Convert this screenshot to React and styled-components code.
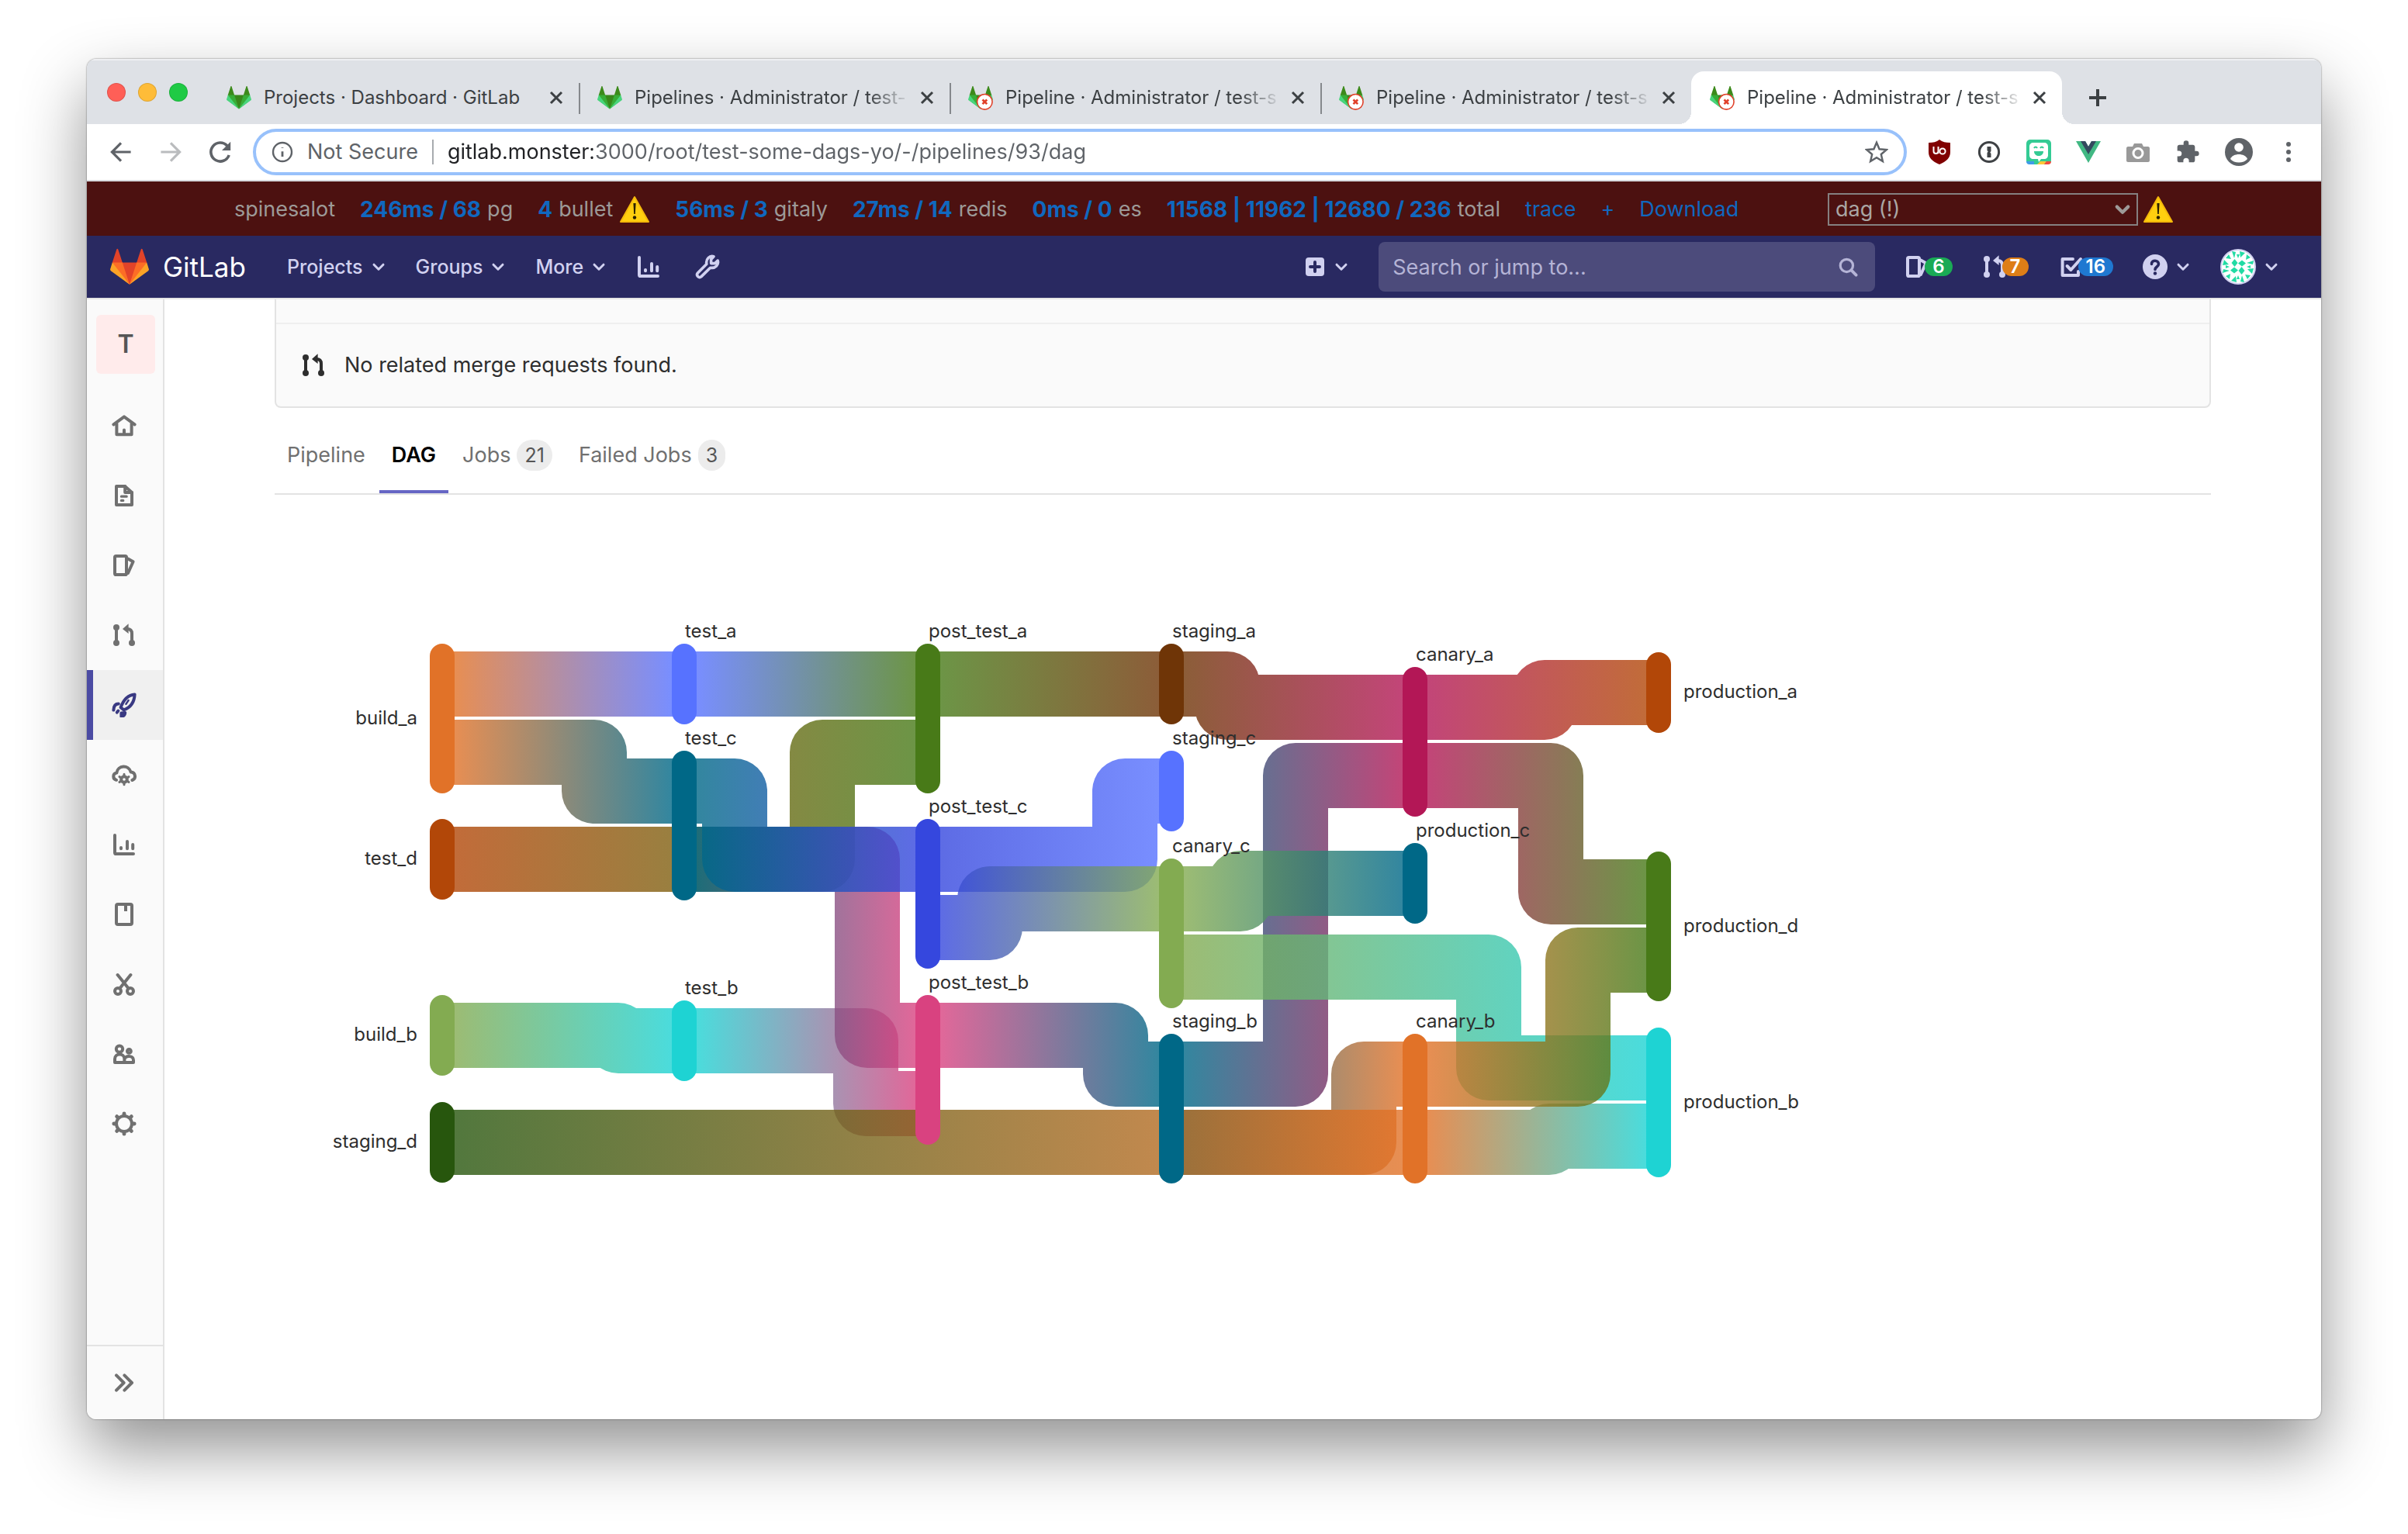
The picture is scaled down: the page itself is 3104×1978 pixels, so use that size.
import React from "react";
import styled, { createGlobalStyle, css } from "styled-components";

const GlobalStyle = createGlobalStyle`
  *, *::before, *::after { box-sizing: border-box; }
  body {
    margin: 0;
    background: #fff;
    color: #303030;
    font-family: Inter, "Liberation Sans", sans-serif;
    font-size: 27px;
    line-height: 36px;
  }
  a { color: inherit; text-decoration: none; }
  button { font: inherit; color: inherit; background: none; border: 0; padding: 0; }
  svg { display: block; flex: none; }
`;

/* ---------- window ---------- */

const Desktop = styled.div`
  display: flex;
  min-height: 100vh;
  padding: 76px 112px 148px;
`;

const Window = styled.div`
  flex: 1;
  min-width: 0;
  display: flex;
  flex-direction: column;
  overflow: hidden;
  border-radius: 12px;
  background: #fff;
  box-shadow: 0 0 2px rgba(0, 0, 0, 0.6), 0 38px 84px rgba(0, 0, 0, 0.43);
`;

const TabStrip = styled.div`
  display: flex;
  align-items: flex-end;
  height: 84px;
  padding-left: 26px;
  background: #dee1e6;
  box-shadow: inset 0 2px 0 #eff0f3;
`;

const Lights = styled.div`
  display: flex;
  gap: 16px;
  width: 130px;
  padding-bottom: 29px;
`;

const Light = styled.button`
  width: 24px;
  height: 24px;
  border-radius: 50%;
  border: 1px solid rgba(0, 0, 0, 0.12);
  background: ${(p) => p.$color};
`;

const Tab = styled.div`
  position: relative;
  display: flex;
  align-items: center;
  width: 478px;
  height: 68px;
  padding: 0 20px 0 24px;
  border-radius: 16px 16px 0 0;
  color: #3c4043;
  font-size: 24px;
  line-height: 32px;
  ${(p) =>
    p.$active
      ? css`
          background: #fff;
          &::before,
          &::after {
            content: "";
            position: absolute;
            bottom: 0;
            width: 16px;
            height: 16px;
          }
          &::before {
            right: 100%;
            background: radial-gradient(circle at 0 0, transparent 16px, #fff 16px);
          }
          &::after {
            left: 100%;
            background: radial-gradient(circle at 100% 0, transparent 16px, #fff 16px);
          }
        `
      : p.$divided &&
        css`
          &::after {
            content: "";
            position: absolute;
            right: -2px;
            top: 15px;
            width: 2px;
            height: 40px;
            background: #85888c;
          }
        `}
`;

const TabTitle = styled.a`
  flex: 1;
  min-width: 0;
  margin: 0 12px 0 16px;
  white-space: nowrap;
  ${(p) => p.$fade && css`mask-image: linear-gradient(90deg, #000 calc(100% - 54px), transparent);`}
`;

const NewTab = styled.button`
  align-self: flex-end;
  display: flex;
  align-items: center;
  height: 68px;
  margin-left: 34px;
  color: #3c4043;
`;

const Toolbar = styled.div`
  display: flex;
  align-items: center;
  height: 74px;
  padding: 0 28px;
  border-bottom: 2px solid #d8dadd;
  background: #fff;
  color: #5f6368;
`;

const ToolButtons = styled.div`
  display: flex;
  gap: 32px;
  margin-right: 26px;
`;

const Omnibox = styled.div`
  flex: 1;
  display: flex;
  align-items: center;
  height: 60px;
  padding: 0 20px;
  border: 4px solid #98c1fb;
  border-radius: 30px;
`;

const SecurityNote = styled.span`
  margin-left: 18px;
  padding-right: 18px;
  border-right: 2px solid #a8abaf;
  line-height: 32px;
  white-space: nowrap;
`;

const UrlInput = styled.input`
  flex: 1;
  min-width: 0;
  margin-left: 18px;
  padding: 0;
  border: 0;
  outline: 0;
  font: inherit;
  color: #5f6368;
  background: linear-gradient(90deg, #202124 187px, #5f6368 187px);
  background-clip: text;
  -webkit-background-clip: text;
  -webkit-text-fill-color: transparent;
`;

const Extensions = styled.div`
  display: flex;
  align-items: center;
  gap: 32px;
  margin-left: 26px;
`;

/* ---------- performance bar ---------- */

const PerfBar = styled.div`
  display: flex;
  align-items: center;
  gap: 32px;
  height: 70px;
  padding: 2px 190px 0;
  background: #4c1110;
  color: #9d9a98;
  white-space: nowrap;
`;

const Metric = styled.div`
  display: flex;
  align-items: center;
  gap: 8px;
`;

const PerfLink = styled.a`
  color: #1068bf;
  ${(p) => p.$strong && css`font-size: 28px; font-weight: 700;`}
`;

const RequestPicker = styled.div`
  display: flex;
  align-items: center;
  gap: 6px;
  margin-left: auto;
`;

const SelectBox = styled.div`
  display: grid;
  width: 400px;
  align-items: center;
  & > * { grid-area: 1 / 1; }
  svg { justify-self: end; margin-right: 8px; pointer-events: none; }
`;

const RequestSelect = styled.select`
  appearance: none;
  height: 42px;
  padding: 0 10px 0 8px;
  border: 2px solid #858080;
  border-radius: 0;
  background: transparent;
  color: #aaa6a4;
  font: inherit;
`;

/* ---------- navigation bar ---------- */

const NavBar = styled.header`
  display: flex;
  align-items: center;
  height: 82px;
  padding: 0 54px 0 30px;
  background: #292961;
  border-bottom: 2px solid #e5e5e5;
  color: #d1d1f0;
  font-size: 25px;
  font-weight: 500;
`;

const Brand = styled.a`
  display: flex;
  align-items: center;
  gap: 18px;
  width: 228px;
  color: #fff;
  font-size: 35px;
  font-weight: 400;
`;

const NavMenus = styled.nav`
  display: flex;
  align-items: center;
  gap: 38px;
`;

const NavTools = styled.div`
  display: flex;
  gap: 44px;
`;

const NavButton = styled.button`
  display: flex;
  align-items: center;
  gap: ${(p) => p.$gap || 10}px;
`;

const NavActions = styled.div`
  display: flex;
  align-items: center;
  gap: 38px;
  margin-left: auto;
`;

const SearchBox = styled.label`
  display: flex;
  align-items: center;
  width: 640px;
  height: 64px;
  padding: 0 22px 0 18px;
  border-radius: 8px;
  background: #4c4b7b;
  color: #b5b4d6;
`;

const SearchInput = styled.input`
  flex: 1;
  min-width: 0;
  padding: 2px 0 0;
  border: 0;
  outline: 0;
  background: none;
  font: 400 27px/36px Inter, "Liberation Sans", sans-serif;
  color: #fff;
  &::placeholder { color: #b5b4d6; opacity: 1; }
`;

const Counter = styled.a`
  display: flex;
  align-items: center;
`;

const CountPill = styled.span`
  min-width: 34px;
  height: 24px;
  margin-left: -6px;
  padding: 0 10px;
  border-radius: 12px;
  background: ${(p) => p.$color};
  color: #fff;
  font-size: 24px;
  font-weight: 600;
  line-height: 24px;
  text-align: center;
`;

/* ---------- page ---------- */

const Body = styled.div`
  flex: 1;
  display: flex;
`;

const Sidebar = styled.nav`
  display: flex;
  flex-direction: column;
  width: 100px;
  border-right: 2px solid #e3e3e3;
  background: #fafafa;
  color: #707070;
`;

const ProjectTile = styled.a`
  margin: 20px 10px 22px 12px;
  border-radius: 6px;
  background: #ffebeb;
  color: #555;
  font-size: 32px;
  font-weight: 600;
  line-height: 76px;
  text-align: center;
`;

const SideItem = styled.a`
  display: flex;
  align-items: center;
  height: 90px;
  padding-left: 32px;
  ${(p) =>
    p.$active &&
    css`
      background: #f0f0f0;
      box-shadow: inset 8px 0 0 #4b4ba3;
      color: #393982;
    `}
`;

const Collapse = styled.button`
  display: flex;
  align-items: center;
  height: 96px;
  margin-top: auto;
  padding-left: 32px;
  border-top: 2px solid #e3e3e3;
`;

const Content = styled.main`
  flex: 1;
  min-width: 0;
  padding: 0 142px;
`;

const InfoWell = styled.section`
  border: 2px solid #e3e3e3;
  border-top: 0;
  border-radius: 0 0 8px 8px;
  background: #fafafa;
  padding-top: 30px;
`;

const InfoRow = styled.div`
  display: flex;
  align-items: center;
  gap: 24px;
  height: 108px;
  padding-left: 32px;
  border-top: 2px solid #efefef;
  color: #2e2e2e;
`;

const PageTabs = styled.nav`
  display: flex;
  gap: 2px;
  height: 112px;
  padding-top: 12px;
  border-bottom: 2px solid #e3e3e3;
`;

const PageTab = styled.a`
  display: flex;
  align-items: center;
  gap: 8px;
  padding: 0 16px;
  color: ${(p) => (p.$active ? "#000" : "#707070")};
  font-weight: ${(p) => (p.$active ? 600 : 400)};
  box-shadow: ${(p) => (p.$active ? "inset 0 -4px 0 #6666c4" : "none")};
`;

const TabCount = styled.span`
  min-width: 34px;
  padding: 0 10px;
  border-radius: 20px;
  background: #ececec;
  color: #555;
  font-size: 25px;
  line-height: 40px;
  text-align: center;
`;

const Graph = styled.svg`
  width: 100%;
  height: auto;
  margin-top: 142px;
`;

const NodeLabel = styled.text`
  fill: #2e2e2e;
  font-size: 24px;
  text-anchor: ${(p) => p.$anchor || "start"};
`;

/* ---------- icons ---------- */

const Icon = ({ size = 32, children, box = 16, width = 2 }) => (
  <svg
    width={size}
    height={size}
    viewBox={`0 0 ${box} ${box}`}
    fill="none"
    stroke="currentColor"
    strokeWidth={width}
    strokeLinecap="round"
    strokeLinejoin="round"
    aria-hidden="true"
  >
    {children}
  </svg>
);

const Chevron = ({ size = 20, width = 1.5 }) => (
  <Icon size={size} box={10} width={width}>
    <path d="M2 3.6l3 3 3-3" />
  </Icon>
);

const Cross = () => (
  <Icon size={18} box={18} width={3}>
    <path d="M2 2l14 14M16 2L2 16" strokeLinecap="butt" />
  </Icon>
);

const orange = ["#e24329", "#fc6d26", "#fca326", "#e24329"];
const green = ["#3c8a1b", "#37ad37", "#48d47c", "#38871b"];

const Tanuki = ({ size, colors = orange, failed }) => (
  <svg width={size} height={size} viewBox="0 0 36 36" aria-hidden="true">
    <path fill={colors[0]} d="M2 14l9.38 9v-9l-4-12.28c-.205-.632-1.176-.632-1.38 0z" />
    <path fill={colors[0]} d="M34 14l-9.38 9v-9l4-12.28c.205-.632 1.176-.632 1.38 0z" />
    <path fill={colors[3]} d="M18 34.38L3 14h30z" />
    <path fill={colors[1]} d="M18 34.38L11.38 14H2l4 11z" />
    <path fill={colors[1]} d="M18 34.38L24.62 14H34l-4 11z" />
    <path fill={colors[2]} d="M2 14L.1 20.16c-.18.565 0 1.2.5 1.56l17.42 12.66z" />
    <path fill={colors[2]} d="M34 14l1.9 6.16c.18.565 0 1.2-.5 1.56L18 34.38z" />
    {failed && (
      <g>
        <circle cx="24" cy="24" r="11" fill="#fff" stroke="#e0402a" strokeWidth="1.8" />
        <path d="M20.800 20.800l6.400 6.400M27.200 20.800l-6.400 6.400" stroke="#e0402a" strokeWidth="3" />
      </g>
    )}
  </svg>
);

const Warning = () => (
  <svg width="40" height="36" viewBox="0 0 40 36" role="img" aria-label="warning">
    <path d="M20 2L38 34H2z" fill="#ffcf0f" stroke="#f5b90a" strokeWidth="2" strokeLinejoin="round" />
    <path d="M18.400 10h3.200l-.8 14h-1.600z" fill="#2b2100" />
    <circle cx="20" cy="28.500" r="2.200" fill="#2b2100" />
  </svg>
);

const MergeIcon = ({ size = 32 }) => (
  <Icon size={size}>
    <path d="M3 3.500v9M10 4c2 0 3 1 3 3v5.500" />
    <path d="M10.800 .6v6.400L7 4z" fill="currentColor" stroke="none" />
    <g fill="currentColor" stroke="none">
      <circle cx="3" cy="3" r="2" />
      <circle cx="3" cy="13" r="2" />
      <circle cx="13" cy="13" r="2" />
    </g>
  </Icon>
);

const IssuesIcon = () => (
  <Icon>
    <rect x="2" y="2" width="7.500" height="12" rx="0.800" />
    <path d="M10.500 3.800L13.800 5.600 10.500 13" />
  </Icon>
);

const ChartIcon = () => (
  <Icon>
    <path d="M2 2v11.200c0 .5.3.8.8.8H14M6 10v.6M10 6v4.600M13.600 8v2.600" />
  </Icon>
);

const sideIcons = [
  ["Project overview", <Icon key="i"><path d="M1.200 7.200L8 2.200l6.800 5M3.200 6.600V13.600h9.600V6.600" /><path d="M8 13.500v-2.800" /></Icon>],
  ["Repository", <Icon key="i"><path d="M3 2h5.500L13 6v8H3z" /><path d="M8.600 2v4H13" /><path d="M6.200 8.600h3.400M6.200 11.200h1.200" strokeWidth="1.600" /></Icon>],
  ["Issues", <IssuesIcon key="i" />],
  ["Merge requests", <MergeIcon key="i" />],
  ["CI / CD", <Icon key="i"><path d="M14.800 1.200c-4 .3-7 2.800-9 8.400l2 1.600c4.600-1.700 6.800-5.200 7-10z" /><path d="M9.200 7.400l1.600-2.400" strokeWidth="1.200" /><path d="M4.400 7.300C2.200 7.300 1.300 9 1.200 11.300M8.600 13c-.1 1.300-1.100 2.200-2.400 2.400v-2.200z" /><path d="M4.200 11.800l-.8 1" /></Icon>],
  ["Operations", <Icon key="i"><path d="M3 11.400C.4 10.600.6 7 3.200 6.700 3.800 1.800 11 1.300 12.300 6.300c3.200.2 3.600 4.200.9 5.200" /><circle cx="8" cy="11" r="1.900" /><path d="M8 7.600v1M8 13.400v1M5 9.300l.9.500M10.100 12.200l.9.500M5 12.700l.9-.5M10.100 9.800l.9-.5" strokeWidth="1.500" /></Icon>],
  ["Analytics", <ChartIcon key="i" />],
  ["Wiki", <Icon key="i"><rect x="3" y="1.500" width="10" height="13" rx="1" /><path d="M9 2v4" strokeLinecap="butt" /></Icon>],
  ["Snippets", <Icon key="i"><circle cx="4" cy="12.500" r="2" /><circle cx="12" cy="12.500" r="2" /><path d="M5.200 10.700L12.200 2M10.800 10.700L3.800 2" /></Icon>],
  ["Members", <Icon key="i"><circle cx="5" cy="4.800" r="2.100" /><circle cx="11.200" cy="6.200" r="1.200" /><path d="M2 13.500v-2.300c0-4 6.200-4 6.200 0v2.300zM8.200 13.500H14v-1.500c0-2.900-4.400-3.200-5.600-1.200" /></Icon>],
  ["Settings", <Icon key="i"><circle cx="8" cy="8" r="5" /><path d="M8 1.400v1M8 13.600v1M1.400 8h1M13.600 8h1M3.300 3.300l.7.700M12 12l.7.700M3.300 12.700l.7-.7M12 4l.7-.7" strokeWidth="2.400" /></Icon>],
];

/* ---------- needs graph ---------- */

const ORIGIN = { x: 354, y: 780, width: 2496, height: 780 };
const COLUMNS = [554, 866, 1180, 1494, 1808, 2122];
const NODE_WIDTH = 32;
const LINK_WIDTH = 84;
const LINK_STEP = 88;

const nodes = {
  build_a: [0, 830, 2, "#e17228"],
  test_d: [0, 1056, 1, "#b24708"],
  build_b: [0, 1283, 1, "#83ab51"],
  staging_d: [0, 1421, 1, "#27560d"],
  test_a: [1, 830, 1, "#5772ff"],
  test_c: [1, 968, 2, "#006887"],
  test_b: [1, 1290, 1, "#1ed3d3"],
  post_test_a: [2, 830, 2, "#487a18"],
  post_test_c: [2, 1056, 2, "#3547de"],
  post_test_b: [2, 1283, 2, "#d94280"],
  staging_a: [3, 830, 1, "#6f3507"],
  staging_c: [3, 968, 1, "#5772ff"],
  canary_c: [3, 1107, 2, "#83ab51"],
  staging_b: [3, 1333, 2, "#006887"],
  canary_a: [4, 860, 2, "#b31756"],
  production_c: [4, 1087, 1, "#006887"],
  canary_b: [4, 1333, 2, "#e17228"],
  production_a: [5, 841, 1, "#b24708"],
  production_d: [5, 1098, 2, "#487a18"],
  production_b: [5, 1325, 2, "#1ed3d3"],
};

/* source, source slot, target, target slot, x of the vertical run */
const links = [
  ["build_a", 0, "test_a", 0, 700],
  ["build_a", 1, "test_c", 0, 766],
  ["test_d", 0, "post_test_a", 1, 1060],
  ["build_b", 0, "test_b", 0, 797],
  ["test_a", 0, "post_test_a", 0, 1000],
  ["test_b", 0, "post_test_b", 1, 1116],
  ["test_c", 1, "post_test_b", 0, 1118],
  ["test_c", 0, "post_test_c", 0, 947],
  ["post_test_a", 0, "staging_a", 0, 1300],
  ["post_test_c", 0, "staging_c", 0, 1450],
  ["post_test_c", 1, "canary_c", 0, 1276],
  ["post_test_b", 0, "staging_b", 0, 1438],
  ["staging_a", 0, "canary_a", 0, 1582],
  ["staging_b", 0, "canary_a", 1, 1670],
  ["staging_b", 1, "canary_b", 0, 1758],
  ["staging_d", 0, "canary_b", 1, 1700],
  ["canary_c", 0, "production_c", 0, 1599],
  ["canary_c", 1, "production_b", 0, 1919],
  ["canary_a", 0, "production_a", 0, 1991],
  ["canary_a", 1, "production_d", 0, 1999],
  ["canary_b", 1, "production_b", 1, 1997],
  ["canary_b", 0, "production_d", 1, 2034],
];

const slotY = (name, slot) => nodes[name][1] + 10 + LINK_WIDTH / 2 + slot * LINK_STEP;

function NeedsGraph() {
  return (
    <Graph
      viewBox={`${ORIGIN.x} ${ORIGIN.y} ${ORIGIN.width} ${ORIGIN.height}`}
      role="img"
      aria-label="Job dependencies"
    >
      <defs>
        {links.map(([from, , to], i) => (
          <linearGradient
            key={i}
            id={`link-${i}`}
            gradientUnits="userSpaceOnUse"
            x1={COLUMNS[nodes[from][0]] + NODE_WIDTH}
            x2={COLUMNS[nodes[to][0]]}
          >
            <stop offset="0" stopColor={nodes[from][3]} />
            <stop offset="1" stopColor={nodes[to][3]} />
          </linearGradient>
        ))}
      </defs>
      <g fill="none" strokeWidth={LINK_WIDTH} strokeLinejoin="round" strokeOpacity="0.8">
        {links.map(([from, fromSlot, to, toSlot, turn], i) => {
          const x0 = COLUMNS[nodes[from][0]] + NODE_WIDTH / 2;
          const x1 = COLUMNS[nodes[to][0]] + NODE_WIDTH / 2;
          const y0 = slotY(from, fromSlot);
          const y1 = slotY(to, toSlot);
          const d = `M${x0} ${y0}H${turn}V${y1}H${x1}`;
          return <path key={i} d={d} stroke={`url(#link-${i})`} />;
        })}
      </g>
      {Object.entries(nodes).map(([name, [column, top, slots, color]]) => {
        const height = 104 + (slots - 1) * (LINK_STEP + 1);
        const left = COLUMNS[column];
        const middle = top + height / 2 + 7;
        const place =
          column === 0
            ? { x: left - 16, y: middle, $anchor: "end" }
            : column === 5
            ? { x: left + NODE_WIDTH + 16, y: middle }
            : { x: left + NODE_WIDTH / 2 + 1, y: top - 8 };
        return (
          <g key={name}>
            <rect x={left} y={top} width={NODE_WIDTH} height={height} rx={NODE_WIDTH / 2} fill={color} />
            <NodeLabel {...place}>{name}</NodeLabel>
          </g>
        );
      })}
    </Graph>
  );
}

/* ---------- data ---------- */

const browserTabs = [
  ["Projects · Dashboard · GitLab", false],
  ["Pipelines · Administrator / test-", false],
  ["Pipeline · Administrator / test-s", true],
  ["Pipeline · Administrator / test-s", true],
  ["Pipeline · Administrator / test-s", true],
];

const metrics = [
  ["246ms / 68", "pg"],
  ["4", "bullet", true],
  ["56ms / 3", "gitaly"],
  ["27ms / 14", "redis"],
  ["0ms / 0", "es"],
  ["11568 | 11962 | 12680 / 236", "total"],
];

export default function App() {
  return (
    <>
      <GlobalStyle />
      <Desktop>
        <Window>
          <TabStrip>
            <Lights>
              <Light $color="#ff5f57" aria-label="Close window" />
              <Light $color="#febc38" aria-label="Minimize window" />
              <Light $color="#1fca45" aria-label="Zoom window" />
            </Lights>
            {browserTabs.map(([title, failed], i) => (
              <Tab key={i} $active={i === 4} $divided={i < 3}>
                <Tanuki size={32} colors={green} failed={failed} />
                <TabTitle href="#" $fade={i > 0}>{title}</TabTitle>
                <button aria-label="Close tab"><Cross /></button>
              </Tab>
            ))}
            <NewTab aria-label="New tab">
              <Icon size={24} box={24} width={4}><path d="M12 1v22M1 12h22" strokeLinecap="butt" /></Icon>
            </NewTab>
          </TabStrip>

          <Toolbar>
            <ToolButtons>
              <button aria-label="Back">
                <Icon><path d="M14.300 8H2.200M8 2.200L2.200 8 8 13.800" strokeWidth="1.600" strokeLinecap="butt" strokeLinejoin="miter" /></Icon>
              </button>
              <button aria-label="Forward">
                <Icon><path d="M1.700 8h12.100M8 2.200L13.800 8 8 13.800" stroke="#babcbe" strokeWidth="1.600" strokeLinecap="butt" strokeLinejoin="miter" /></Icon>
              </button>
              <button aria-label="Reload">
                <Icon>
                  <path d="M13.600 10A6 6 0 1 1 12.400 4" strokeWidth="1.800" strokeLinecap="butt" />
                  <path d="M14.600 1.400V7H9z" fill="currentColor" stroke="none" />
                </Icon>
              </button>
            </ToolButtons>
            <Omnibox>
              <Icon size={28} box={14} width={1.2}>
                <circle cx="7" cy="7" r="6" />
                <path d="M7 6.600v3.400M7 4v.4" strokeWidth="1.400" strokeLinecap="butt" />
              </Icon>
              <SecurityNote>Not Secure</SecurityNote>
              <UrlInput
                aria-label="Address"
                defaultValue="gitlab.monster:3000/root/test-some-dags-yo/-/pipelines/93/dag"
              />
              <button aria-label="Bookmark">
                <Icon size={30} width={1.3}>
                  <path d="M8 1.500l1.900 4.500 4.900.4-3.700 3.200 1.100 4.800L8 11.800l-4.200 2.600 1.100-4.800L1.200 6.400l4.900-.4z" strokeLinejoin="miter" />
                </Icon>
              </button>
            </Omnibox>
            <Extensions>
              <button aria-label="uBlock">
                <svg width="32" height="32" viewBox="0 0 32 32">
                  <path d="M16 0c4 3 8 4 14 4v12c0 8-5 12-14 16C7 28 2 24 2 16V4c6 0 10-1 14-4z" fill="#800000" />
                  <path d="M8.500 9v6c0 4 6 4 6 0V9M14.500 9v9" fill="none" stroke="#fff" strokeWidth="2" />
                  <circle cx="20" cy="15" r="3.600" fill="none" stroke="#fff" strokeWidth="2" />
                </svg>
              </button>
              <button aria-label="1Password">
                <svg width="32" height="32" viewBox="0 0 32 32">
                  <circle cx="16" cy="16" r="12.600" fill="#fff" stroke="#3f4245" strokeWidth="3" />
                  <path d="M13.500 9h5v6l-1.200 1.500 1.200 1.500v5h-5v-6l1.200-1.500-1.200-1.500z" fill="#3f4245" />
                </svg>
              </button>
              <button aria-label="Bitmoji">
                <svg width="32" height="32" viewBox="0 0 32 32">
                  <rect width="32" height="32" rx="5" fill="#34cb94" />
                  <path d="M0 28h10v4H4c-2 0-4-1-4-4z" fill="#3f9be8" />
                  <path d="M14 32l4-4h8l-3 4z" fill="#ffc738" />
                  <path d="M23 32l3-4h6c0 3-2 4-4 4z" fill="#f04b3e" />
                  <path d="M9 4h14c3 0 5 2 5 5v11c0 3-2 5-5 5h-4l-3 4-1-4H9c-3 0-5-2-5-5V9c0-3 2-5 5-5z" fill="#fff" />
                  <path d="M10 15h12c0 8-12 8-12 0z" fill="#34cb94" />
                  <path d="M10 11c1-2 3-2 4 0M18 11c1-2 3-2 4 0" fill="none" stroke="#34cb94" strokeWidth="2" />
                </svg>
              </button>
              <button aria-label="Vue">
                <svg width="32" height="32" viewBox="0 0 32 32">
                  <path d="M0 2h12l4 7 4-7h12L16 30z" fill="#41b883" />
                  <path d="M6 2h6l4 7 4-7h6L16 19z" fill="#34495e" />
                </svg>
              </button>
              <button aria-label="Screenshot">
                <svg width="32" height="32" viewBox="0 0 32 32">
                  <path d="M3 9h6l2-4h10l2 4h6c1 0 2 1 2 2v16c0 1-1 2-2 2H3c-1 0-2-1-2-2V11c0-1 1-2 2-2z" fill="#999" />
                  <circle cx="16" cy="17.500" r="6" fill="none" stroke="#fff" strokeWidth="3" />
                </svg>
              </button>
              <button aria-label="Extensions">
                <svg width="32" height="32" viewBox="0 0 24 24">
                  <path d="M20.500 11H19V7c0-1.100-.9-2-2-2h-4V3.500a2.500 2.500 0 0 0-5 0V5H4c-1.100 0-2 .9-2 2v3.800h1.500a2.700 2.700 0 0 1 0 5.400H2V20c0 1.100.9 2 2 2h3.800v-1.500a2.700 2.700 0 0 1 5.400 0V22H17c1.100 0 2-.9 2-2v-4h1.500a2.500 2.500 0 0 0 0-5z" fill="#5f6368" />
                </svg>
              </button>
              <button aria-label="Profile">
                <svg width="36" height="38" viewBox="0 0 36 38">
                  <circle cx="18" cy="19" r="18" fill="#5f6368" />
                  <circle cx="18" cy="13" r="5.800" fill="#fff" />
                  <path d="M7 28c3-8 19-8 22 0-5 6-17 6-22 0z" fill="#fff" />
                </svg>
              </button>
              <button aria-label="Menu">
                <svg width="28" height="32" viewBox="0 0 28 32" fill="#5f6368">
                  <circle cx="14" cy="6" r="3" /><circle cx="14" cy="16" r="3" /><circle cx="14" cy="26" r="3" />
                </svg>
              </button>
            </Extensions>
          </Toolbar>

          <PerfBar>
            <span>spinesalot</span>
            {metrics.map(([value, label, warn]) => (
              <Metric key={label}>
                <PerfLink href="#" $strong>{value}</PerfLink>
                <span>{label}</span>
                {warn && <Warning />}
              </Metric>
            ))}
            <PerfLink href="#">trace</PerfLink>
            <PerfLink href="#">+</PerfLink>
            <PerfLink href="#">Download</PerfLink>
            <RequestPicker>
              <SelectBox>
                <RequestSelect aria-label="Request" defaultValue="dag">
                  <option value="dag">dag (!)</option>
                </RequestSelect>
                <Chevron size={24} width={1.8} />
              </SelectBox>
              <Warning />
            </RequestPicker>
          </PerfBar>

          <NavBar>
            <Brand href="#"><Tanuki size={50} />GitLab</Brand>
            <NavMenus>
              {["Projects", "Groups", "More"].map((name) => (
                <NavButton key={name}>{name}<Chevron /></NavButton>
              ))}
              <NavTools>
                <a href="#" aria-label="Analytics"><ChartIcon /></a>
                <a href="#" aria-label="Admin area">
                  <Icon width={1.8}>
                    <path d="M10.300 5.800V3.200L12 1.400C9.500.6 6.800 2.800 7.400 6.200L1.700 12c-1.300 1.500.8 3.600 2.300 2.300l5.800-5.700c3.400.6 5.600-2.100 4.800-4.600l-1.800 1.800z" />
                  </Icon>
                </a>
              </NavTools>
            </NavMenus>
            <NavActions>
              <NavButton aria-label="New" $gap={12}>
                <svg width="24" height="24" viewBox="0 0 24 24">
                  <rect width="24" height="24" rx="4" fill="#d1d1f0" />
                  <path d="M12 6v12M6 12h12" stroke="#292961" strokeWidth="4" strokeLinecap="round" />
                </svg>
                <Chevron />
              </NavButton>
              <SearchBox>
                <SearchInput placeholder="Search or jump to..." aria-label="Search or jump to" />
                <Icon size={26}><circle cx="7" cy="7" r="5" /><path d="M11 11l3.500 3.500" strokeWidth="2.400" /></Icon>
              </SearchBox>
              <Counter href="#" aria-label="Issues"><IssuesIcon /><CountPill $color="#1aaa55">6</CountPill></Counter>
              <Counter href="#" aria-label="Merge requests"><MergeIcon /><CountPill $color="#de7e17">7</CountPill></Counter>
              <Counter href="#" aria-label="To-Do">
                <Icon><path d="M9.500 3H2.800v10.500H13V11M5.800 7.500l2.400 2.500L14.500 3" /></Icon>
                <CountPill $color="#1f78d1">16</CountPill>
              </Counter>
              <NavButton aria-label="Help">
                <svg width="32" height="32" viewBox="0 0 32 32">
                  <circle cx="16" cy="16" r="16" fill="#d1d1f0" />
                  <path d="M11.500 12.500c0-6 9-5.500 9 0 0 3.500-4.500 3.500-4.500 7" fill="none" stroke="#292961" strokeWidth="3.600" strokeLinecap="round" />
                  <circle cx="16" cy="24.500" r="2.200" fill="#292961" />
                </svg>
                <Chevron />
              </NavButton>
              <NavButton aria-label="Account">
                <svg width="46" height="46" viewBox="0 0 46 46">
                  <circle cx="23" cy="23" r="22" fill="#fff" stroke="#d1d1f0" strokeWidth="2" />
                  <g fill="#22dba4">
                    {[0, 90, 180, 270].map((turn) => (
                      <g key={turn} transform={`rotate(${turn} 23 23)`}>
                        <path d="M18.500 13l4 5-4 5-4-5z" />
                        <path d="M15 3l5 1-2 8zM25 3l7 2-6 6zM11 7l3 6-7-1zM21 7h4l-2 5z" />
                      </g>
                    ))}
                  </g>
                </svg>
                <Chevron />
              </NavButton>
            </NavActions>
          </NavBar>

          <Body>
            <Sidebar aria-label="Project">
              <ProjectTile href="#">T</ProjectTile>
              {sideIcons.map(([name, icon]) => (
                <SideItem key={name} href="#" aria-label={name} $active={name === "CI / CD"}>
                  {icon}
                </SideItem>
              ))}
              <Collapse aria-label="Expand sidebar">
                <Icon><path d="M3 3.200L7.800 8 3 12.800M8.200 3.200L13 8l-4.800 4.800" /></Icon>
              </Collapse>
            </Sidebar>
            <Content>
              <InfoWell>
                <InfoRow><MergeIcon />No related merge requests found.</InfoRow>
              </InfoWell>
              <PageTabs aria-label="Pipeline views">
                <PageTab href="#">Pipeline</PageTab>
                <PageTab href="#" $active>DAG</PageTab>
                <PageTab href="#">Jobs <TabCount>21</TabCount></PageTab>
                <PageTab href="#">Failed Jobs <TabCount>3</TabCount></PageTab>
              </PageTabs>
              <NeedsGraph />
            </Content>
          </Body>
        </Window>
      </Desktop>
    </>
  );
}
